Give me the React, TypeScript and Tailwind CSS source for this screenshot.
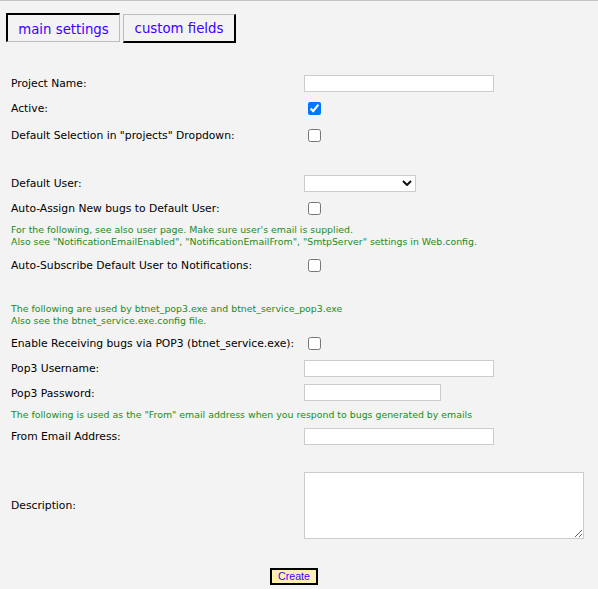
import type { ReactNode } from 'react'

const label = "w-[293px] shrink-0 pt-[3px] text-[10.75px] text-black"
const note = "text-[9.4px] leading-[12px] text-[#228b22]"
const box = "bg-white border border-[#cccccc] outline-none"

function Row({ h, text, children }: { h: string; text: string; children?: ReactNode }) {
  return (
    <div className={`flex items-center ${h}`}>
      <div className={label}>{text}</div>
      <div className="flex items-center">{children}</div>
    </div>
  )
}

function Check({ on = false }: { on?: boolean }) {
  return <input type="checkbox" defaultChecked={on} className="ml-[4px] w-[13px] h-[13px]" />
}

export default function App() {
  return (
    <div
      className="min-h-[589px] bg-[#f3f3f3] border-t border-[#c4c4c4]"
      style={{ fontFamily: '"DejaVu Sans", Verdana, sans-serif' }}
    >
      <div className="flex items-start gap-[3px] pl-[6px] pt-[12px]">
        <div className="w-[114px] h-[29px] pt-[3px] flex items-center justify-center border-t-2 border-l-2 border-t-black border-l-black border-r border-b border-r-[#bdbdbd] border-b-[#bdbdbd] text-[13.3px] text-[#3c00ff]">
          main settings
        </div>
        <div className="mt-[1px] w-[113px] h-[29px] pt-[2px] flex items-center justify-center border-t border-l border-t-[#bdbdbd] border-l-[#bdbdbd] border-r-2 border-b-2 border-r-black border-b-black text-[13.3px] text-[#3c00ff]">
          custom fields
        </div>
      </div>

      <div className="pl-[11px] pt-[28px]">
        <Row h="h-[24px]" text="Project Name:">
          <input type="text" className={`${box} w-[190px] h-[17px]`} />
        </Row>
        <Row h="h-[26px]" text="Active:">
          <Check on />
        </Row>
        <Row h="h-[28px]" text={'Default Selection in "projects" Dropdown:'}>
          <Check />
        </Row>
        <div className="h-[22px]" />
        <Row h="h-[24px]" text="Default User:">
          <div className="relative">
            <select className={`${box} block appearance-none w-[112px] h-[17px] text-[11px]`}>
              <option value=""></option>
            </select>
            <svg
              className="pointer-events-none absolute right-[4px] top-[5px]"
              width="10"
              height="6"
              viewBox="0 0 10 6"
            >
              <path d="M1 1l4 4 4-4" fill="none" stroke="#111" strokeWidth="2" />
            </svg>
          </div>
        </Row>
        <Row h="h-[26px]" text="Auto-Assign New bugs to Default User:">
          <Check />
        </Row>
        <div className={`h-[28px] pt-[2px] flex flex-col justify-center ${note}`}>
          <div>For the following, see also user page. Make sure user's email is supplied.</div>
          <div>
            Also see "NotificationEmailEnabled", "NotificationEmailFrom", "SmtpServer" settings in Web.config.
          </div>
        </div>
        <Row h="h-[32px]" text="Auto-Subscribe Default User to Notifications:">
          <Check />
        </Row>
        <div className="h-[21px]" />
        <div className={`h-[28px] pt-[1px] ${note} leading-[11.5px]`}>
          <div>The following are used by btnet_pop3.exe and btnet_service_pop3.exe</div>
          <div>Also see the btnet_service.exe.config file.</div>
        </div>
        <Row h="h-[26px]" text="Enable Receiving bugs via POP3 (btnet_service.exe):">
          <Check />
        </Row>
        <Row h="h-[24px]" text="Pop3 Username:">
          <input type="text" className={`${box} w-[190px] h-[17px]`} />
        </Row>
        <Row h="h-[25px]" text="Pop3 Password:">
          <input type="password" className={`${box} w-[137px] h-[17px]`} />
        </Row>
        <div className={`h-[18px] pt-[1px] flex items-center ${note}`}>
          The following is used as the "From" email address when you respond to bugs generated by emails
        </div>
        <Row h="h-[26px]" text="From Email Address:">
          <input type="text" className={`${box} w-[190px] h-[17px]`} />
        </Row>
        <div className="h-[20px]" />
        <Row h="h-[72px]" text="Description:">
          <textarea className={`${box} w-[280px] h-[67px]`} />
        </Row>
      </div>

      <div className="w-[588px] flex justify-center pt-[27px]">
        <button
          className="h-[17px] px-[6px] flex items-center border-2 border-black bg-[#ffefb3] text-[10.7px] text-[#3c00ff]"
          style={{ fontFamily: '"Liberation Sans", Arial, sans-serif' }}
        >
          Create
        </button>
      </div>
    </div>
  )
}
